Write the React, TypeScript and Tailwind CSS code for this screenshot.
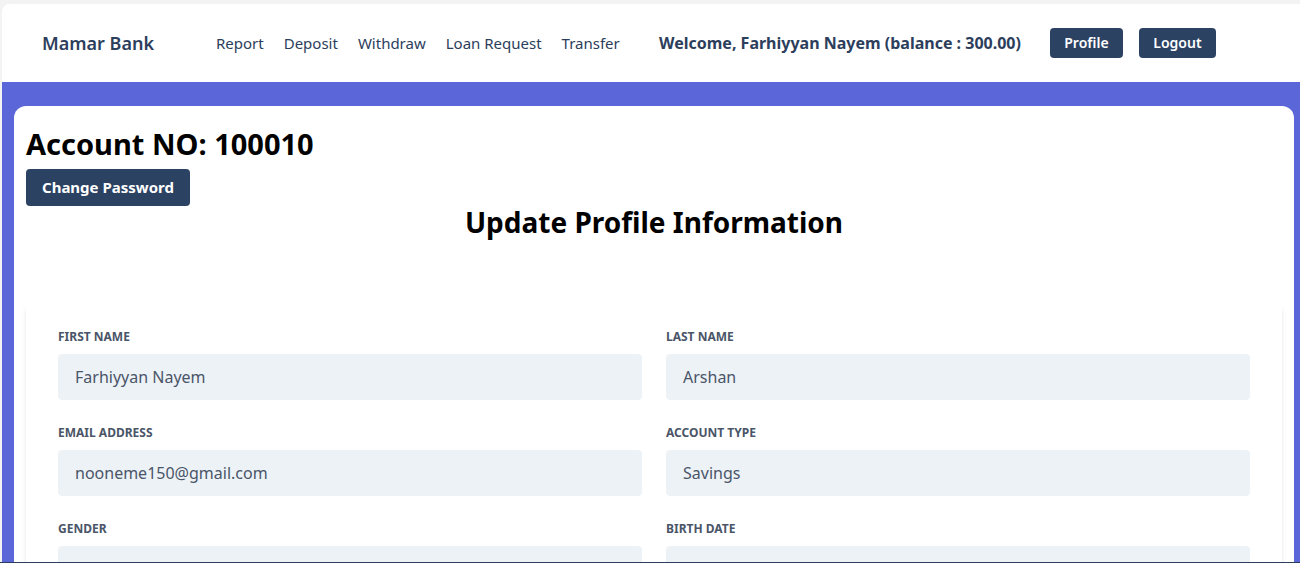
const Field = ({ label, value }: { label: string; value: string }) => (
  <div className="mb-6">
    <label className="block uppercase text-xs leading-[18px] font-bold text-[#4a5568] mb-2">{label}</label>
    <div className="h-[46px] w-full bg-[#edf2f7] border border-[#edf2f7] rounded px-4 flex items-center text-base text-[#4a5568]">
      {value}
    </div>
  </div>
)

const App = () => {
  return (
    <div className="h-[563px] overflow-hidden bg-[#f3f3f3] pt-1 pl-[2px] border-b border-[#2c3e5c]" style={{ fontFamily: '"Noto Sans", "Open Sans", sans-serif' }}>
      {/* Navbar */}
      <nav className="h-[78px] bg-white rounded-tl-lg flex items-center pl-10 text-[#2c3e5c]">
        <div className="w-[174px] text-lg font-semibold">Mamar Bank</div>
        <div className="w-[443px] flex gap-5 text-[15px]">
          <a>Report</a>
          <a>Deposit</a>
          <a>Withdraw</a>
          <a>Loan Request</a>
          <a>Transfer</a>
        </div>
        <div className="text-base font-bold">Welcome, Farhiyyan Nayem (balance : 300.00)</div>
        <button className="ml-[29px] h-[30px] w-[73px] rounded bg-[#2c4263] text-white text-sm font-semibold">Profile</button>
        <button className="ml-4 h-[30px] w-[77px] rounded bg-[#2c4263] text-white text-sm font-semibold">Logout</button>
      </nav>

      {/* Content */}
      <div className="bg-[#5b67d8] pl-3 pr-1.5 pt-6 h-full">
        <div className="bg-white rounded-xl px-3 pt-[20px]">
          <h1 className="text-[29px] leading-9 font-bold text-black">Account NO: 100010</h1>
          <button className="mt-[7px] h-[37px] px-4 rounded bg-[#2c4263] text-white text-[15px] font-bold">Change Password</button>
          <h2 className="-mt-0.5 text-[28px] leading-9 font-bold text-black text-center">Update Profile Information</h2>

          <form className="mt-16 bg-white shadow-md rounded px-8 pt-6 pb-8">
            <div className="grid grid-cols-2 gap-x-6">
              <Field label="First Name" value="Farhiyyan Nayem" />
              <Field label="Last Name" value="Arshan" />
              <Field label="Email Address" value="nooneme150@gmail.com" />
              <Field label="Account Type" value="Savings" />
              <Field label="Gender" value="" />
              <Field label="Birth Date" value="" />
            </div>
          </form>
        </div>
      </div>
    </div>
  )
}

export default App
